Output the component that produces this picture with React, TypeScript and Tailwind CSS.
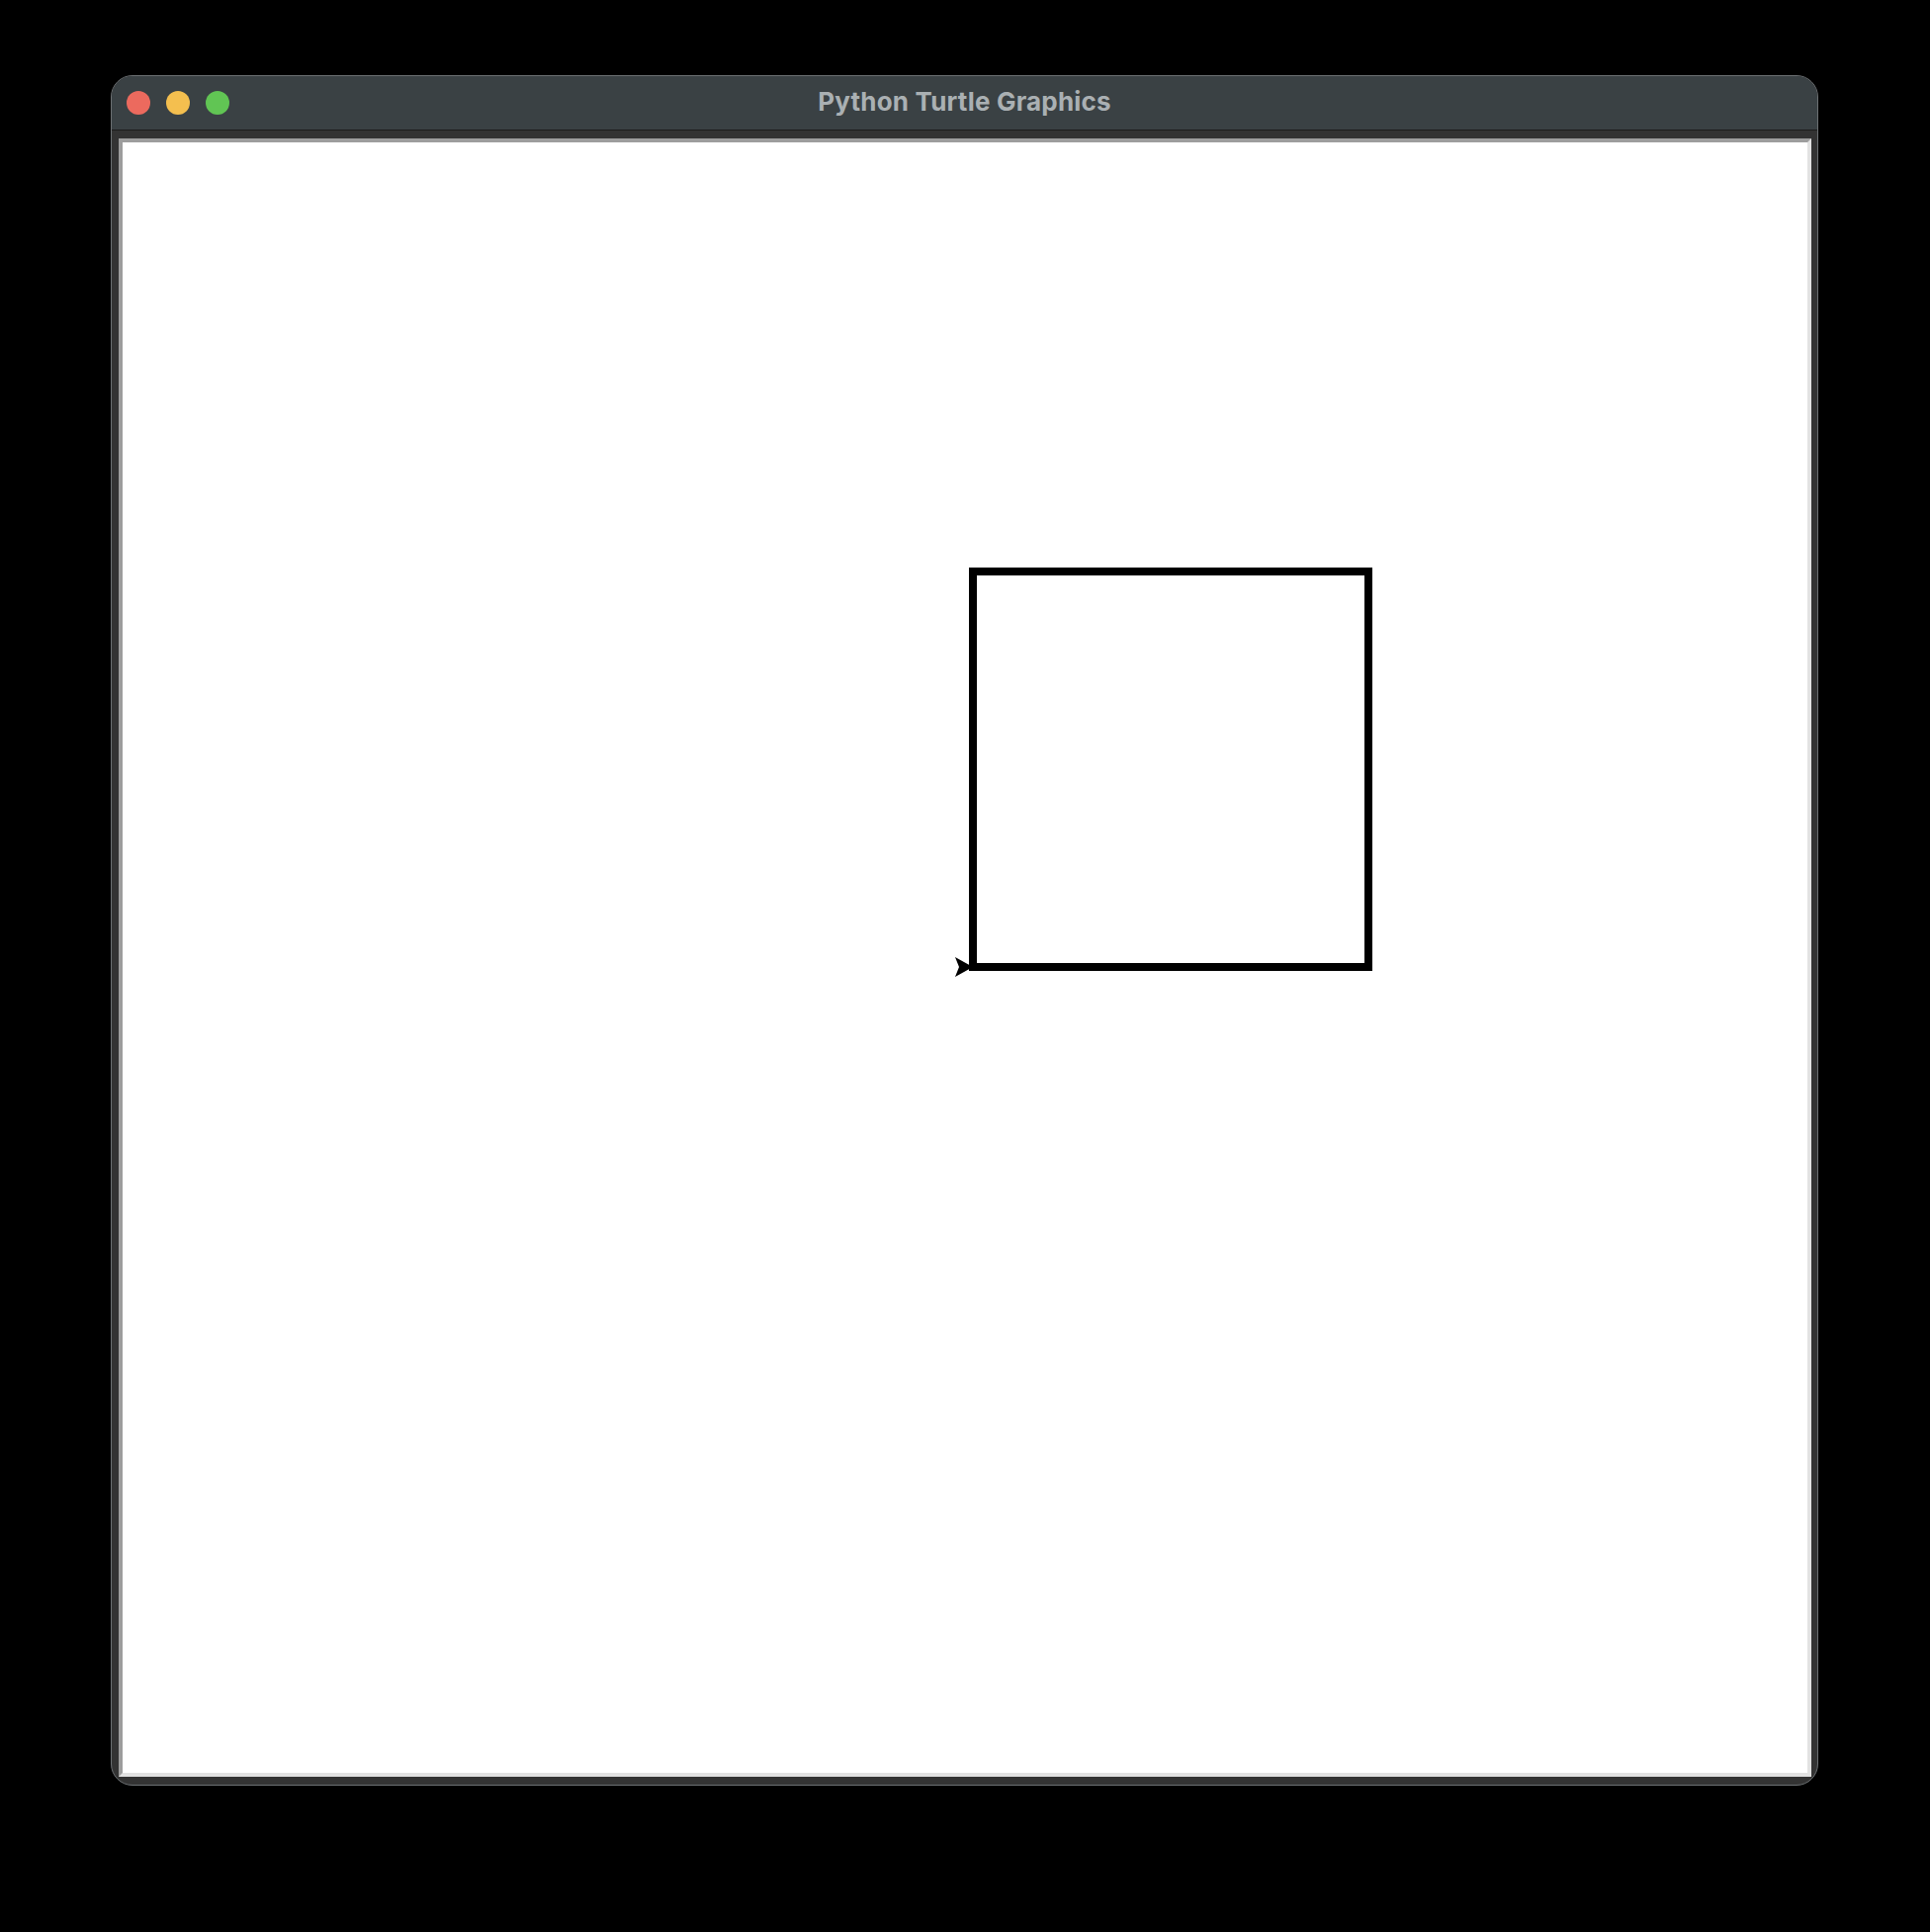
export default function App() {
  return (
    <div className="min-h-[1954px] w-[1952px] bg-black pl-[112px] pt-[76px]">
      {/* Window */}
      <div className="flex h-[1730px] w-[1727px] flex-col overflow-hidden rounded-[22px] border border-[#6c7073] bg-[#333333]">
        {/* Title bar */}
        <div className="relative flex h-[54px] shrink-0 items-center justify-center bg-[#3a4144] pb-[4px]">
          <div className="absolute left-[15px] top-[15px] flex gap-[16px]">
            <span className="block h-[24px] w-[24px] rounded-full bg-[#ec6a5e]" />
            <span className="block h-[24px] w-[24px] rounded-full bg-[#f4bf4f]" />
            <span className="block h-[24px] w-[24px] rounded-full bg-[#61c554]" />
          </div>
          <span className="text-[26px] font-bold tracking-[0.2px] text-[#aab0b3] [font-family:Inter,'Liberation_Sans',sans-serif]">
            Python Turtle Graphics
          </span>
        </div>
        <div className="h-px shrink-0 bg-[#1c1c1c]" />

        {/* Canvas frame */}
        <div className="flex flex-1 pb-[8px] pl-[7px] pr-[6px] pt-[8px]">
          <div className="flex-1 border-b-[4px] border-l-[4px] border-r-[4px] border-t-[4px] border-b-[#e2e2e2] border-l-[#9d9d9d] border-r-[#e2e2e2] border-t-[#9d9d9d] bg-white">
            <svg width="1704" height="1649" viewBox="0 0 1704 1649" className="block">
              <rect
                x="860"
                y="434"
                width="400"
                height="400"
                fill="none"
                stroke="#000"
                strokeWidth="8"
                strokeLinejoin="miter"
              />
              <polygon points="860,834 842,824 846,834 842,844" fill="#000" />
            </svg>
          </div>
        </div>
      </div>
    </div>
  );
}
